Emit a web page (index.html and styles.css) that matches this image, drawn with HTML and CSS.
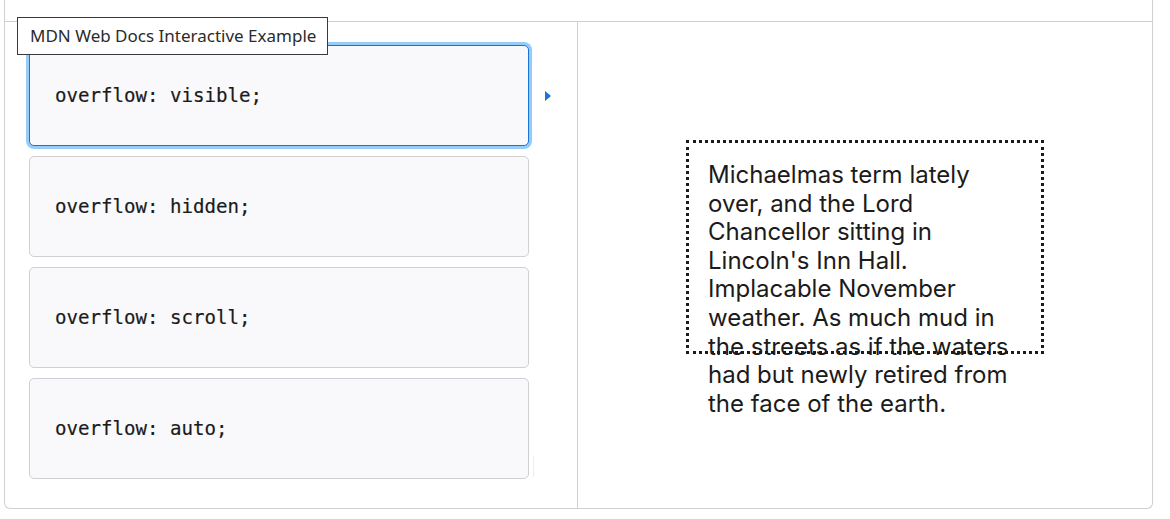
FILE: index.html
```html
<!DOCTYPE html>
<html lang="en">
<head>
<meta charset="utf-8">
<title>Overflow example</title>
<link rel="stylesheet" href="styles.css">
</head>
<body>
<div class="frame">
  <div class="header"></div>
  <div class="panes">
    <div class="choices">
      <div class="choice selected">
        <code>overflow: visible;</code>
        <span class="marker"></span>
      </div>
      <div class="choice"><code>overflow: hidden;</code></div>
      <div class="choice"><code>overflow: scroll;</code></div>
      <div class="choice last"><code>overflow: auto;</code></div>
    </div>
    <div class="output">
      <div class="example">Michaelmas term lately over, and the Lord Chancellor sitting in Lincoln's Inn Hall. Implacable November weather. As much mud in the streets as if the waters had but newly retired from the face of the earth.</div>
    </div>
  </div>
</div>
<div class="tooltip">MDN Web Docs Interactive Example</div>
</body>
</html>
```
FILE: styles.css
```css
html, body {
  margin: 0;
  padding: 0;
  background: #ffffff;
}

body {
  width: 1170px;
  height: 519px;
  overflow: hidden;
  position: relative;
  font-family: "Noto Sans", "Open Sans", sans-serif;
}

.frame {
  margin-left: 4px;
  width: 1147px;
  height: 508px;
  border: 1px solid #cfcfd4;
  border-top: none;
  border-radius: 0 0 6px 6px;
  display: flex;
  flex-direction: column;
}

.header {
  height: 21px;
  flex: none;
  border-bottom: 1px solid #cfcfd4;
}

.panes {
  flex: 1;
  display: grid;
  grid-template-columns: 573px 1fr;
}

.choices {
  border-right: 1px solid #cfcfd4;
  padding: 23px 0 0 24px;
  display: flex;
  flex-direction: column;
  gap: 10px;
  position: relative;
}

.choices::after {
  content: "";
  position: absolute;
  left: 528px;
  top: 434px;
  width: 1px;
  height: 21px;
  background: #e6eef6;
}

.choice {
  position: relative;
  box-sizing: border-box;
  width: 500px;
  height: 101px;
  border: 1px solid #cfcfd4;
  border-radius: 5px;
  background: #f9f9fb;
  display: flex;
  align-items: center;
  padding-left: 25px;
}

.choice code {
  font-family: "DejaVu Sans Mono", "Liberation Mono", monospace;
  font-size: 19.1px;
  color: #1b1b1b;
  -webkit-text-stroke: 0.2px #1b1b1b;
}

.choice.selected {
  border-color: #1a73d6;
  box-shadow: 0 0 0 3px #96ccf9;
}

.marker {
  position: absolute;
  right: -23px;
  top: 45px;
  width: 0;
  height: 0;
  border-top: 5px solid transparent;
  border-bottom: 5px solid transparent;
  border-left: 6px solid #1a73d6;
}

.output {
  display: flex;
  justify-content: center;
  align-items: flex-start;
  padding-top: 118px;
}

.example {
  box-sizing: border-box;
  width: 358px;
  height: 214px;
  border: 3px dotted #1b1b1b;
  padding: 18px 19px;
  font-family: "Inter", "Noto Sans", sans-serif;
  font-size: 24px;
  line-height: 28.6px;
  color: #1b1b1b;
  text-align: left;
}

.tooltip {
  position: absolute;
  left: 17px;
  top: 17px;
  box-sizing: border-box;
  width: 311px;
  height: 38px;
  border: 1px solid #3a3a3a;
  background: #ffffff;
  color: #2b2b2b;
  font-size: 17px;
  line-height: 36px;
  padding-left: 12px;
  white-space: nowrap;
}
```
